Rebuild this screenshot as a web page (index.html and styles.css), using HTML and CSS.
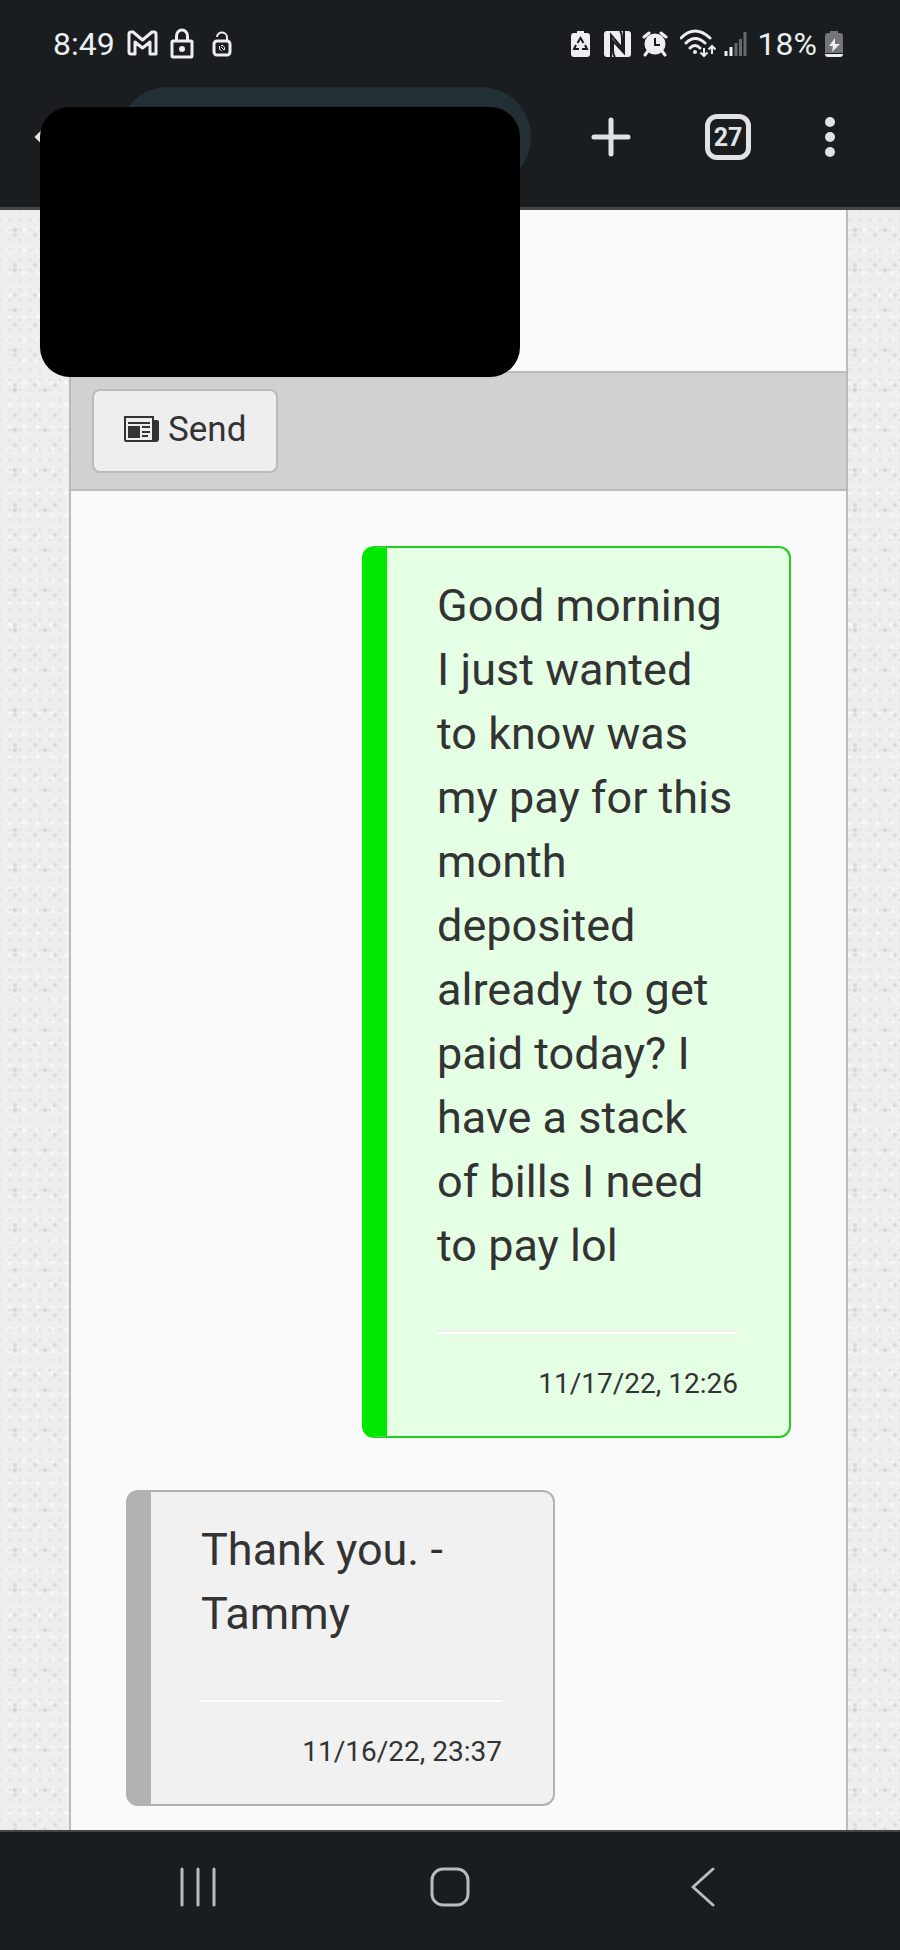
FILE: index.html
```html
<!DOCTYPE html>
<html lang="en">
<head>
  <meta charset="UTF-8" />
  <title>Messages</title>
  <meta name="viewport" content="width=device-width, initial-scale=1.0" />
  <link rel="stylesheet" href="styles.css">
</head>
<body>
  <header class="top">
    <!-- status bar -->
    <div class="status">
      <div class="status-left">
        <span>8:49</span>
        <svg width="31" height="30" viewBox="0 0 31 30" fill="none" stroke="#eceeef" stroke-width="3" stroke-linejoin="round"><path d="M2 5Q2 3 4 3H6L15.500 11L25 3H27Q29 3 29 5V25H23V13L15.500 19L8 13V25H4Q2 25 2 23Z"/></svg>
        <svg width="24" height="32" viewBox="0 0 24 32" fill="none" stroke="#eceeef" stroke-width="3"><rect x="2" y="13" width="20" height="16" rx="1"/><path d="M6.500 13V8a5.500 6 0 0 1 11 0v5"/><circle cx="12" cy="21" r="3" fill="#eceeef" stroke="none"/></svg>
        <svg class="unlock" width="20" height="28" viewBox="0 0 20 28" fill="none" stroke="#eceeef" stroke-width="3"><rect x="2" y="11" width="16" height="14" rx="3"/><path d="M5 7a5 5 0 0 1 10 1v3" stroke-width="2"/><path d="M7.500 16v3l2 2M9 15.500h2l1.500 2V20M9 17l3 3" stroke-width="1"/></svg>
      </div>
      <div class="status-right">
        <svg width="25" height="30" viewBox="0 0 25 30"><path fill="#eceeef" d="M6 2h7v2h3q3 0 3 3v18q0 3-3 3H3q-3 0-3-3V7q0-3 3-3h3z"/><path fill="none" stroke="#191d1f" stroke-width="2" d="M6.500 14l3-5 3 5M14 16l2 4h-5M8 20H3l2-4"/></svg>
        <svg width="30" height="30" viewBox="0 0 30 30"><rect y="2" width="27" height="26" rx="3" fill="#eceeef"/><path d="M7 28V6l11 13V9q0-5-2-7M20 2v22L9 12v9q0 5 2 7" fill="none" stroke="#191d1f" stroke-width="2"/></svg>
        <svg width="30" height="30" viewBox="0 0 30 30"><circle cx="13" cy="15" r="10.500" fill="#eceeef"/><path d="M2 8l5-4M24 8l-5-4M6 22l-3 4M20 22l3 4" stroke="#eceeef" stroke-width="3" stroke-linecap="round"/><path d="M13 9v7h5" fill="none" stroke="#191d1f" stroke-width="2"/></svg>
        <svg width="36" height="30" viewBox="0 0 36 30" fill="none" stroke="#eceeef" stroke-width="3"><path d="M1 9q14-14 29 0M6 14q9-9 19 0M10 19q5-5 10 0" stroke-linecap="round"/><circle cx="15" cy="23" r="2" fill="#eceeef" stroke="none"/><path d="M24 19v8M20.500 23.500l3.500 3.500 3.500-3.500M32 25v-8M28.500 20.500l3.500-3.500 3.500 3.500" stroke-width="2"/></svg>
        <svg width="26" height="30" viewBox="0 0 26 30" stroke-width="3"><path d="M2 22v5M7 18v9" stroke="#eceeef"/><path d="M12 14v13M16.500 10v17M21 3v24" stroke="#66696a"/></svg>
        <span>18%</span>
        <svg width="18" height="30" viewBox="0 0 18 30"><path fill="#737677" d="M5 2h8v2h2q3 0 3 3v17H0V7q0-3 3-3h2z"/><path fill="#eceeef" d="M0 25h18q0 3-3 3H3q-3 0-3-3zM10 9l-6 8h4l-1 6 8-8h-5z"/></svg>
      </div>
    </div>

    <!-- browser toolbar -->
    <div class="toolbar">
      <button class="tool" aria-label="Back"><svg width="40" height="40" viewBox="0 0 40 40" fill="none" stroke="#dfe3e6" stroke-width="5" stroke-linecap="round"><path d="M37 20H4M20 4L4 20l16 16"/></svg></button>
      <div class="address"></div>
      <button class="tool" aria-label="New tab"><svg width="40" height="40" viewBox="0 0 40 40" stroke="#dfe3e6" stroke-width="5" stroke-linecap="round"><path d="M20 3v34M3 20h34"/></svg></button>
      <button class="tool tabs" aria-label="Open tabs">27</button>
      <button class="tool" aria-label="Menu"><svg width="10" height="40" viewBox="0 0 10 40" fill="#dfe3e6"><circle cx="5" cy="5" r="5"/><circle cx="5" cy="20" r="5"/><circle cx="5" cy="35" r="5"/></svg></button>
    </div>
    <div class="cover"></div>
  </header>

  <main class="page">
    <div class="panel">
      <div class="blank"></div>
      <div class="actions">
        <button class="send">
          <svg width="36" height="28" viewBox="0 0 36 28"><path fill="#333" d="M30 5h3q2 0 2 2v17q0 3-3 3H2q-2 0-2-2V1h30z"/><path fill="#eee" d="M2 3h26v22H2z"/><path fill="#333" d="M4 7h22v2H4zM4 11h12v12H4zM18 11h8v2h-8zM18 16h8v2h-8zM18 20h6v2h-6z"/></svg>
          Send
        </button>
      </div>
      <div class="messages">
        <div class="bubble sent">
          <p>Good morning I just wanted to know was my pay for this month deposited already to get paid today? I have a stack of bills I need to pay lol</p>
          <hr>
          <time>11/17/22, 12:26</time>
        </div>
        <div class="bubble received">
          <p>Thank you. - Tammy</p>
          <hr>
          <time>11/16/22, 23:37</time>
        </div>
      </div>
    </div>
  </main>

  <!-- system navigation -->
  <nav class="bottom">
    <button class="tool" aria-label="Recent apps"><svg width="40" height="40" viewBox="0 0 40 40" stroke="#b9bcbe" stroke-width="3" stroke-linecap="round"><path d="M4 2v36M20 2v36M36 2v36"/></svg></button>
    <button class="tool" aria-label="Home"><svg width="40" height="40" viewBox="0 0 40 40" fill="none" stroke="#b9bcbe" stroke-width="3"><rect x="2" y="2" width="36" height="36" rx="11"/></svg></button>
    <button class="tool" aria-label="Back"><svg width="40" height="40" viewBox="0 0 40 40" fill="none" stroke="#b9bcbe" stroke-width="3" stroke-linecap="round" stroke-linejoin="round"><path d="M31 2L11 20l20 18"/></svg></button>
  </nav>
</body>
</html>
```

FILE: styles.css
```css
*,*::before,*::after{box-sizing:border-box;margin:0;padding:0}
body{font-family:Roboto,"Liberation Sans",sans-serif;color:#333;display:flex;flex-direction:column;min-height:100vh}
button{font-family:inherit;cursor:pointer}
svg{display:block;flex:none}
/* top */
.top{position:relative;background:#191d1f;border-bottom:3px solid #434547}
.status{height:87px;padding:0 57px 0 53px;display:flex;justify-content:space-between;align-items:center;font-size:32px;color:#eceeef}
.status-left{display:flex;align-items:center;gap:12px}
.status-left .unlock{margin-left:6px}
.status-right{display:flex;align-items:center;gap:8px}
.toolbar{display:flex;align-items:center;padding:0 65px 20px 34px;gap:74px}
.tool{display:flex;align-items:center;justify-content:center;background:none;border:none;color:#dfe3e6}
.address{flex:1;height:100px;margin:0 -14px 0 -30px;border-radius:50px;background:#223036}
.tabs{width:46px;height:46px;border:5px solid #dfe3e6;border-radius:12px;font-family:"Liberation Sans Narrow",Roboto,sans-serif;font-size:25px;font-weight:700}
.cover{position:absolute;z-index:1;top:107px;left:40px;width:480px;height:270px;border-radius:30px;background:#000}
/* page */
.page{flex:1;display:flex;padding:0 52px 0 69px;background-color:#eee;
  background-image:radial-gradient(circle,#d2d2d2 1px,transparent 3px),radial-gradient(circle,#dadada 1px,transparent 3px),radial-gradient(circle,#e2e2e2 1px,transparent 2px),radial-gradient(circle,#f8f8f8 1px,transparent 3px);
  background-size:30px 40px,20px 30px,10px 10px,14px 22px;background-position:0 0,5px 10px,5px 5px,3px 8px}
.panel{flex:1;background:#fafafa;border:solid #bbb;border-width:0 2px}
.blank{height:161px}
.actions{padding:16px 21px;background:#d1d1d1;border:solid #bbb;border-width:2px 0}
.send{display:flex;align-items:center;gap:8px;height:84px;padding:0 30px 4px;background:#eee;border:2px solid #bbb;border-radius:8px;font-size:35px;color:#333}
.messages{display:flex;flex-direction:column;gap:52px;padding:55px 55px 24px}
/* bubbles */
.bubble{width:64.5%;padding:26px 51px 32px 50px;border:2px solid;border-left-width:25px;border-radius:12px}
.bubble p{font-size:45px;line-height:64px}
.bubble hr{margin:52px 0 30px;border:solid #eee;border-width:2px 0;border-bottom-color:#fff}
.bubble time{display:block;font-size:28px;line-height:40px;text-align:right}
.sent{align-self:flex-end;background:#e5ffe5;border-color:#2c2;border-left-color:#00e800}
.received{background:#f1f1f1;border-color:#b2b2b2}
/* bottom */
.bottom{display:flex;justify-content:space-around;height:120px;padding:0 72px 8px;background:#191d1f;border-top:2px solid #434547}
```
